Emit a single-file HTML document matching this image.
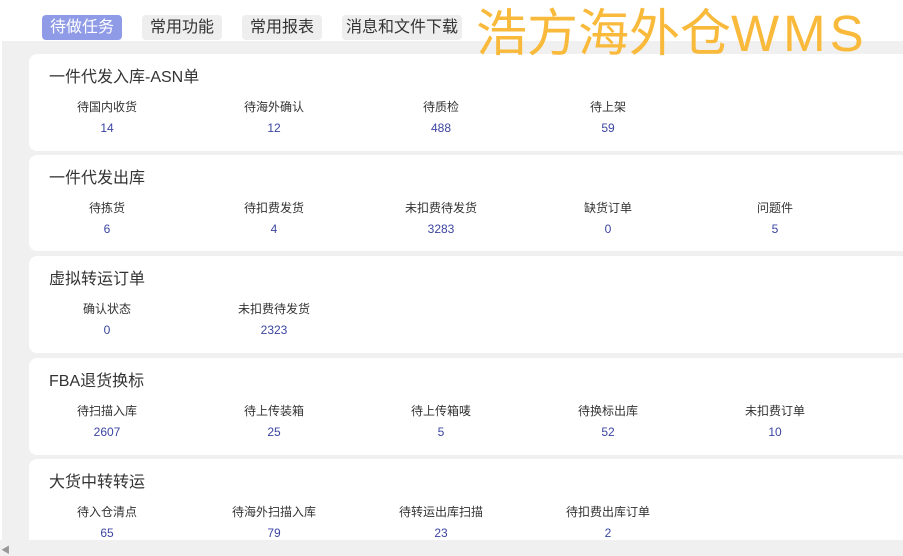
<!DOCTYPE html>
<html><head><meta charset="utf-8"><style>
*{margin:0;padding:0;box-sizing:border-box}
body{width:903px;height:556px;overflow:hidden;background:#fff;font-family:"Liberation Sans","Noto Sans CJK SC",sans-serif;position:relative}
.tab{position:absolute;top:15px;height:25px;border-radius:4px;background:#eeeeee;color:#333;font-size:16px;line-height:25px;text-align:center}
.tab.on{background:#8f9be6;color:#fff}
.big{position:absolute;left:476px;top:4px;font-size:51px;line-height:60px;color:#f9b93a;white-space:nowrap;z-index:2}
.big span{letter-spacing:4px}
.bg{position:absolute;left:2px;top:41px;right:0;bottom:0;background:#f0f0f0}
.card{position:absolute;left:29px;width:900px;background:#fff;border-radius:8px}
.card h3{position:absolute;left:20px;top:9px;font-size:16px;font-weight:normal;color:#333}
.it{position:absolute;width:140px;text-align:center;top:44px;font-size:12px;color:#333}
.it b{display:block;font-weight:normal;color:#3b45a0;margin-top:6px}
.sb{position:absolute;left:0;right:0;top:540px;bottom:0;background:#f0f0f0}
</style></head><body>
<div class="tab on" style="left:42px;width:80px">待做任务</div>
<div class="tab" style="left:142px;width:80px">常用功能</div>
<div class="tab" style="left:242px;width:80px">常用报表</div>
<div class="tab" style="left:342px;width:120px">消息和文件下载</div>
<div class="bg"></div>
<div class="big">浩方海外仓<span>WMS</span></div>

<div class="card" style="top:54px;height:97px"><h3>一件代发入库-ASN单</h3>
<div class="it" style="left:8px">待国内收货<b>14</b></div>
<div class="it" style="left:175px">待海外确认<b>12</b></div>
<div class="it" style="left:342px">待质检<b>488</b></div>
<div class="it" style="left:509px">待上架<b>59</b></div></div>

<div class="card" style="top:155px;height:96px"><h3>一件代发出库</h3>
<div class="it" style="left:8px">待拣货<b>6</b></div>
<div class="it" style="left:175px">待扣费发货<b>4</b></div>
<div class="it" style="left:342px">未扣费待发货<b>3283</b></div>
<div class="it" style="left:509px">缺货订单<b>0</b></div>
<div class="it" style="left:676px">问题件<b>5</b></div></div>

<div class="card" style="top:256px;height:97px"><h3>虚拟转运订单</h3>
<div class="it" style="left:8px">确认状态<b>0</b></div>
<div class="it" style="left:175px">未扣费待发货<b>2323</b></div></div>

<div class="card" style="top:358px;height:97px"><h3>FBA退货换标</h3>
<div class="it" style="left:8px">待扫描入库<b>2607</b></div>
<div class="it" style="left:175px">待上传装箱<b>25</b></div>
<div class="it" style="left:342px">待上传箱唛<b>5</b></div>
<div class="it" style="left:509px">待换标出库<b>52</b></div>
<div class="it" style="left:676px">未扣费订单<b>10</b></div></div>

<div class="card" style="top:459px;height:97px"><h3>大货中转转运</h3>
<div class="it" style="left:8px">待入仓清点<b>65</b></div>
<div class="it" style="left:175px">待海外扫描入库<b>79</b></div>
<div class="it" style="left:342px">待转运出库扫描<b>23</b></div>
<div class="it" style="left:509px">待扣费出库订单<b>2</b></div></div>

<div class="sb"><span style="position:absolute;left:1px;top:3px;font-size:9px;color:#999">◀</span></div>
</body></html>
